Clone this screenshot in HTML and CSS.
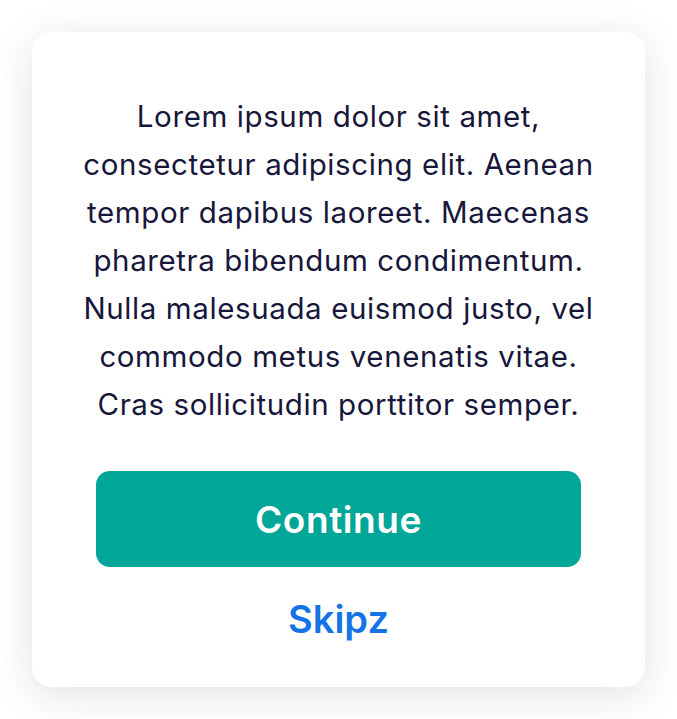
FILE: index.html
```html
<!DOCTYPE html>
<html>
<head>
<meta charset="utf-8">
<link rel="stylesheet" href="styles.css">
</head>
<body>
<div class="card">
  <p class="message">Lorem ipsum dolor sit amet,<br>consectetur adipiscing elit. Aenean<br>tempor dapibus laoreet. Maecenas<br>pharetra bibendum condimentum.<br>Nulla malesuada euismod justo, vel<br>commodo metus venenatis vitae.<br>Cras sollicitudin porttitor semper.</p>
  <button class="primary">Continue</button>
  <button class="link">Skipz</button>
</div>
</body>
</html>
```

FILE: styles.css
```css
html, body {
  margin: 0;
  background: #ffffff;
}
body {
  padding: 32px;
  font-family: Inter, "Noto Sans", sans-serif;
}
.card {
  background: #ffffff;
  border-radius: 20px;
  box-shadow: 0 8px 40px rgba(30, 30, 70, 0.13);
  height: 655px;
  box-sizing: border-box;
  padding: 60px 20px 0;
  display: flex;
  flex-direction: column;
  align-items: center;
}
.message {
  margin: 0;
  font-size: 29.5px;
  line-height: 48px;
  letter-spacing: 0.6px;
  color: #17163b;
  text-align: center;
}
.primary {
  margin-top: 43px;
  width: 485px;
  height: 96px;
  border: none;
  border-radius: 14px;
  background: #00a698;
  color: #ffffff;
  font-family: inherit;
  font-size: 37px;
  font-weight: 600;
  letter-spacing: 0.6px;
}
.link {
  margin-top: 29px;
  border: none;
  background: none;
  color: #1473e6;
  font-family: inherit;
  font-size: 38px;
  font-weight: 600;
  line-height: 46px;
  padding: 0;
}
```
